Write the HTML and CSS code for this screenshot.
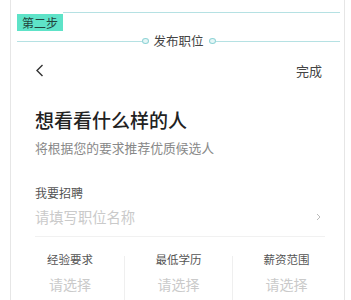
FILE: index.html
```html
<!DOCTYPE html>
<html lang="zh-CN">
<head>
    <meta charset="UTF-8">
    <meta name="viewport" content="width=device-width, initial-scale=1.0">
    <title>发布职位</title>
    <link rel="stylesheet" href="styles.css">
</head>
<body>
    <div class="page">
        <div class="steps">
            <div class="step-row">
                <span class="badge">第二步</span>
                <span class="rule"></span>
            </div>
            <div class="title-row">
                <span class="rule"></span>
                <span class="dot"></span>
                <span class="step-title">发布职位</span>
                <span class="dot"></span>
                <span class="rule"></span>
            </div>
        </div>

        <div class="panel">
            <div class="nav">
                <svg class="back" width="9" height="13" viewBox="0 0 9 13">
                    <polyline points="7.5,1 2,6.5 7.5,12" fill="none" stroke="#333" stroke-width="1.4"/>
                </svg>
                <span class="done">完成</span>
            </div>

            <h1>想看看什么样的人</h1>
            <p class="sub">将根据您的要求推荐优质候选人</p>

            <p class="label">我要招聘</p>
            <div class="field">
                <span class="placeholder">请填写职位名称</span>
                <svg class="arrow" width="5" height="8" viewBox="0 0 5 8">
                    <polyline points="1,1 4,4 1,7" fill="none" stroke="#bbb" stroke-width="1"/>
                </svg>
            </div>
        </div>

        <div class="filters">
            <div class="filter">
                <p class="filter-name">经验要求</p>
                <p class="pick">请选择</p>
            </div>
            <div class="filter">
                <p class="filter-name">最低学历</p>
                <p class="pick">请选择</p>
            </div>
            <div class="filter">
                <p class="filter-name">薪资范围</p>
                <p class="pick">请选择</p>
            </div>
        </div>
    </div>
</body>
</html>
```

FILE: styles.css
```css
*{
    margin: 0;
    padding: 0;
    box-sizing: border-box;
}
body{
    background-color: #fff;
    font-family: "Noto Sans CJK SC", "Noto Sans", sans-serif;
    color: #333;
}
.page{
    margin-left: 10px;
    width: 335px;
    height: 300px;
    border-left: 1px solid #e6e6e6;
    border-right: 1px solid #e6e6e6;
    overflow: hidden;
}
.steps{
    padding: 0 4px 0 6px;
}
.step-row{
    display: flex;
    align-items: flex-start;
    padding-top: 12px;
}
.rule{
    flex: 1;
    height: 1px;
    background-color: #b5e1e3;
}
.badge{
    display: block;
    margin-top: 2px;
    width: 46px;
    height: 17px;
    line-height: 17px;
    text-align: center;
    font-size: 12px;
    color: #23433d;
    background-color: #5ee3c8;
}
.title-row{
    display: flex;
    align-items: center;
    height: 16px;
    margin-top: 2px;
}
.dot{
    width: 7px;
    height: 6px;
    border: 1px solid #8fd3d6;
    border-radius: 50%;
    background-color: #e6f7f7;
}
.step-title{
    font-size: 12.5px;
    line-height: 16px;
    color: #444;
    margin: 0 5px;
}
.panel{
    padding: 0 19px 0 24px;
}
.nav{
    display: flex;
    justify-content: space-between;
    align-items: center;
    height: 26px;
    margin-top: 8px;
}
.back{
    display: block;
    margin-left: 0;
}
.done{
    font-size: 13px;
    color: #444;
    margin-right: 3px;
}
h1{
    font-size: 19px;
    font-weight: 500;
    line-height: 26px;
    color: #222;
    margin-top: 24px;
}
.sub{
    font-size: 12.8px;
    line-height: 18px;
    color: #888;
    margin-top: 6px;
}
.label{
    font-size: 12px;
    line-height: 18px;
    color: #555;
    margin-top: 27px;
}
.field{
    display: flex;
    justify-content: space-between;
    align-items: center;
    margin-top: 4px;
    padding-bottom: 8px;
    border-bottom: 1px solid #f1f1f1;
}
.placeholder{
    font-size: 14.3px;
    line-height: 22px;
    color: #cacaca;
}
.arrow{
    display: block;
    margin-right: 4px;
}
.filters{
    display: grid;
    grid-template-columns: 108px 108px 108px;
    padding: 0 4px 0 5px;
    margin-top: 19px;
}
.filter{
    text-align: center;
    height: 60px;
}
.filter + .filter{
    border-left: 1px solid #efefef;
}
.filter-name{
    font-size: 11.5px;
    line-height: 16px;
    color: #555;
    margin-top: -5px;
}
.pick{
    font-size: 14px;
    line-height: 20px;
    color: #cacaca;
    margin-top: 7px;
}
```
